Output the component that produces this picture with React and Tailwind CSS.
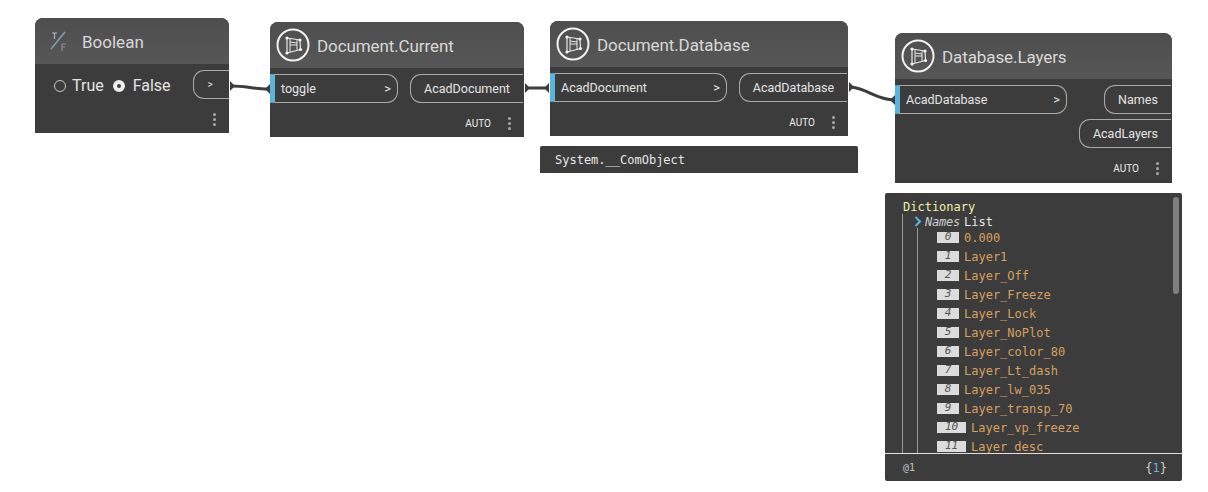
const uiFont = "font-['Roboto',sans-serif]"
const monoFont = "font-['DejaVu_Sans_Mono',monospace]"

const layers = [
  "0.000", "Layer1", "Layer_Off", "Layer_Freeze", "Layer_Lock", "Layer_NoPlot",
  "Layer_color_80", "Layer_Lt_dash", "Layer_lw_035", "Layer_transp_70", "Layer_vp_freeze", "Layer_desc",
]

function NodeIcon() {
  return (
    <svg width="34" height="34" viewBox="0 0 34 34" fill="none" className="shrink-0">
      <circle cx="17" cy="17" r="15.5" stroke="#f2f2f2" strokeWidth="2" />
      <path d="M11 10 L24 12 L24.5 21.5 L11 25 Z" stroke="#e8e8e8" strokeWidth="1.2" strokeLinejoin="round" />
      <path d="M14 10.5 V24 M14 17 H21 M21 11.5 V22.5 M14 14 L21 15" stroke="#e8e8e8" strokeWidth="1" />
      <circle cx="11" cy="10" r="1.6" fill="#f2f2f2" />
      <circle cx="24" cy="12" r="1.6" fill="#f2f2f2" />
      <circle cx="11" cy="25" r="1.6" fill="#f2f2f2" />
      <circle cx="24.5" cy="21.5" r="1.6" fill="#f2f2f2" />
    </svg>
  )
}

function Dots() {
  return (
    <div className="flex flex-col gap-[2px]">
      <div className="w-[3px] h-[3px] rounded-full bg-[#a8a8a8]" />
      <div className="w-[3px] h-[3px] rounded-full bg-[#a8a8a8]" />
      <div className="w-[3px] h-[3px] rounded-full bg-[#a8a8a8]" />
    </div>
  )
}

function InPort({ label, width }) {
  return (
    <div className={`flex items-center justify-between h-[29px] ${width} pt-px bg-[#3c3c3c] border-y border-r border-[#a9a9a9] rounded-r-[11px] border-l-[5px] border-l-[#5ab4e0] pl-[6px] pr-[6px] text-[12.5px] text-[#e4e4e4]`}>
      <span>{label}</span>
      <span className="text-[13px]">&gt;</span>
    </div>
  )
}

function OutPort({ label, width }) {
  return (
    <div className={`flex items-center justify-center h-[29px] ${width} pt-px border-y border-l border-[#a9a9a9] rounded-l-[11px] text-[12.5px] text-[#e4e4e4] mr-px`}>
      {label}
    </div>
  )
}

function Footer({ children }) {
  return <div className="flex items-center justify-end gap-[17px] h-[22px] pr-[13px]">{children}</div>
}

function Auto() {
  return <span className="text-[10px] text-[#eeeeee]">AUTO</span>
}

function Header({ title }) {
  return (
    <div className="flex items-center gap-[7px] h-[46px] pl-[6px] bg-linear-to-b from-[#4e4e4e] to-[#575757] rounded-t-[8px]">
      <NodeIcon />
      <span className="mt-[3px] text-[17px] tracking-[-0.1px] text-[#d8d8d8]">{title}</span>
    </div>
  )
}

function Wire({ d, x1, y1, x2, y2 }) {
  return (
    <>
      <path d={d} stroke="#3c3c3c" strokeWidth="3" fill="none" />
      <path d={`M${x1} ${y1 - 5} L${x1 + 4} ${y1 - 1} V${y1 + 1} L${x1} ${y1 + 5} Z`} fill="#3c3c3c" />
      <path d={`M${x2} ${y2 - 5} L${x2 - 4} ${y2 - 1} V${y2 + 1} L${x2} ${y2 + 5} Z`} fill="#3c3c3c" />
    </>
  )
}

export default function App() {
  return (
    <div className={`relative w-[1208px] h-[492px] bg-white overflow-hidden ${uiFont}`}>
      {/* Boolean */}
      <div className="absolute left-[35px] top-[18px] w-[194px] h-[115px] bg-[#3c3c3c] rounded-t-[8px]">
        <div className="flex items-center h-[46px] pl-[14px] bg-linear-to-b from-[#4e4e4e] to-[#575757] rounded-t-[8px]">
          <svg width="20" height="24" viewBox="0 0 20 24" fill="none" className="shrink-0">
            <path d="M3 4 H8 M5.5 4 V10" stroke="#b5b5b5" strokeWidth="1.2" />
            <path d="M2 20 L16 3" stroke="#7d9db5" strokeWidth="1.6" />
            <path d="M13 15 V22 M13 15 H17 M13 18 H16" stroke="#8f8f8f" strokeWidth="1.2" />
          </svg>
          <span className="ml-[13px] mt-[3px] text-[17px] text-[#d8d8d8]">Boolean</span>
        </div>
        <div className="flex items-center justify-between h-[29px] mt-[6px] pl-[19px]">
          <div className="flex items-center pt-[3px] text-[16px] text-[#e4e4e4]">
            <div className="w-[12px] h-[12px] rounded-full border border-[#c8c8c8]" />
            <span className="ml-[6px]">True</span>
            <div className="ml-[9px] w-[12px] h-[12px] rounded-full border-[4px] border-[#eeeeee]" />
            <span className="ml-[8px]">False</span>
          </div>
          <div className="flex items-center justify-center w-[36px] h-[29px] pr-[3px] border-y border-l border-[#a9a9a9] rounded-l-[11px] text-[10px] text-[#e4e4e4]">&gt;</div>
        </div>
        <div className="flex justify-end mt-[14px] pr-[13px]"><Dots /></div>
      </div>

      {/* Document.Current */}
      <div className="absolute left-[270px] top-[22px] w-[254px] h-[115px] bg-[#3c3c3c] rounded-t-[8px]">
        <Header title="Document.Current" />
        <div className="flex justify-between mt-[6px] mb-[9px]">
          <InPort label="toggle" width="w-[128px]" />
          <OutPort label="AcadDocument" width="w-[113px]" />
        </div>
        <Footer><Auto /><Dots /></Footer>
      </div>

      {/* Document.Database */}
      <div className="absolute left-[550px] top-[21px] w-[298px] h-[115px] bg-[#3c3c3c] rounded-t-[8px]">
        <Header title="Document.Database" />
        <div className="flex justify-between mt-[6px] mb-[9px]">
          <InPort label="AcadDocument" width="w-[177px]" />
          <OutPort label="AcadDatabase" width="w-[108px]" />
        </div>
        <Footer><Auto /><Dots /></Footer>
      </div>

      {/* watch value */}
      <div className={`absolute left-[540px] top-[146px] w-[318px] h-[27px] flex items-center pl-[15px] bg-[#3c3c3c] rounded-t-[2px] text-[12px] text-[#e6e6e6] ${monoFont}`}>
        System.__ComObject
      </div>

      {/* Database.Layers */}
      <div className="absolute left-[895px] top-[33px] w-[277px] h-[150px] bg-[#3c3c3c] rounded-t-[8px]">
        <Header title="Database.Layers" />
        <div className="flex justify-between mt-[6px]">
          <InPort label="AcadDatabase" width="w-[172px]" />
          <OutPort label="Names" width="w-[67px]" />
        </div>
        <div className="flex justify-end mt-[5px] mb-[9px]">
          <OutPort label="AcadLayers" width="w-[92px]" />
        </div>
        <Footer><Auto /><Dots /></Footer>
      </div>

      {/* Dictionary preview */}
      <div className={`absolute left-[885px] top-[193px] w-[297px] h-[288px] bg-[#3c3c3c] rounded-[2px] text-[12px] ${monoFont}`}>
        <div className="h-[260px] overflow-hidden pt-[8px]">
          <div className="pl-[18px] h-[13px] leading-[13px] text-[#f0f0a8]">Dictionary</div>
          <div className="ml-[17px] border-l border-[#9a9a9a] h-[300px]">
            <div className="flex items-center h-[15px] pl-[11px]">
              <svg width="8" height="11" viewBox="0 0 8 11" fill="none" className="shrink-0">
                <path d="M1.5 1 L6 5.5 L1.5 10" stroke="#5ab4e0" strokeWidth="2" />
              </svg>
              <span className="ml-[3px] w-[39px] text-[12px] tracking-[-0.2px] italic text-[#cfcfcf]">Names</span>
              <span className="text-[#e6e6e6]">List</span>
            </div>
            <div className="ml-[14px] -mt-px border-l border-[#9a9a9a] h-[300px] pl-[19px]">
              {layers.map((name, i) => (
                <div key={name} className="flex items-center h-[19px]">
                  <div className={`flex items-center justify-center h-[11px] bg-[#dcdcdc] text-[11px] italic text-[#555555] ${i < 10 ? "w-[22px]" : "w-[29px]"}`}>{i}</div>
                  <span className="ml-[5px] text-[#d9a05f]">{name}</span>
                </div>
              ))}
            </div>
          </div>
        </div>
        <div className="flex items-center justify-between h-[28px] border-t border-[#e0e0e0] pl-[18px] pr-[15px]">
          <span className="text-[10px] text-[#c0c0c0]">@1</span>
          <span className="text-[#d0d0d0]">{"{"}<span className="text-[#5ab4e0]">1</span>{"}"}</span>
        </div>
        <div className="absolute left-[288px] top-[4px] w-[6px] h-[97px] rounded-[3px] bg-[#808080]" />
      </div>

      {/* wires */}
      <svg width="1208" height="492" className="absolute left-0 top-0 pointer-events-none">
        <Wire d="M232 86 C245 86 255 89 268 89" x1={230} y1={86} x2={270} y2={89} />
        <Wire d="M527 88 H547" x1={525} y1={88} x2={549} y2={88} />
        <Wire d="M851 87 C868 89 875 99 893 100" x1={849} y1={87} x2={895} y2={100} />
      </svg>
    </div>
  )
}
